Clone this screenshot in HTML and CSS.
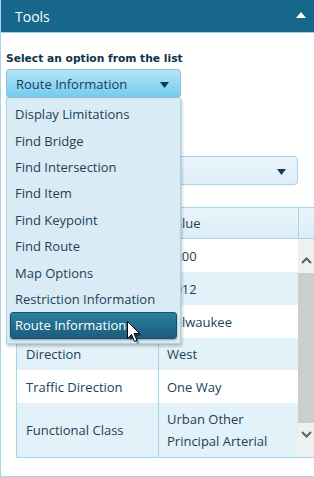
FILE: index.html
```html
<!DOCTYPE html>
<html>
<head>
<meta charset="utf-8">
<link rel="stylesheet" href="styles.css">
</head>
<body>
<div class="panel">
  <div class="hdr">
    <span class="hdr-title">Tools</span>
    <svg class="hdr-tri" width="10" height="6" viewBox="0 0 10 6"><path d="M5 0 L10 6 L0 6 Z" fill="#fff"/></svg>
  </div>
  <div class="content">
    <div class="label">Select an option from the list</div>
    <div class="sel-wrap">
      <div class="select active">
        <span>Route Information</span>
        <svg class="arr" width="9" height="6" viewBox="0 0 9 6"><path d="M0 0 L9 0 L4.5 6 Z" fill="#103a52"/></svg>
      </div>
      <ul class="list">
        <li>Display Limitations</li>
        <li>Find Bridge</li>
        <li>Find Intersection</li>
        <li>Find Item</li>
        <li>Find Keypoint</li>
        <li>Find Route</li>
        <li>Map Options</li>
        <li>Restriction Information</li>
        <li class="hl">Route Information</li>
      </ul>
    </div>
    <div class="select second">
      <span></span>
      <svg class="arr" width="9" height="6" viewBox="0 0 9 6"><path d="M0 0 L9 0 L4.5 6 Z" fill="#103a52"/></svg>
    </div>
    <div class="table">
      <div class="thead">
        <div class="th"></div>
        <div class="th">Value</div>
        <div class="th th-end"></div>
      </div>
      <div class="tbody">
        <div class="rows">
          <div class="row r33"><div class="td"></div><div class="td">1200</div></div>
          <div class="row alt r33"><div class="td"></div><div class="td">1012</div></div>
          <div class="row r33"><div class="td"></div><div class="td">Milwaukee</div></div>
          <div class="row alt r32"><div class="td">Direction</div><div class="td">West</div></div>
          <div class="row r33"><div class="td">Traffic Direction</div><div class="td">One Way</div></div>
          <div class="row alt r54"><div class="td">Functional Class</div><div class="td two">Urban Other<br>Principal Arterial</div></div>
        </div>
        <div class="sbar">
          <div class="sbtn up"><svg width="11" height="7" viewBox="0 0 11 7"><path d="M1 6 L5.5 1.5 L10 6" fill="none" stroke="#5f5f5f" stroke-width="2"/></svg></div>
          <div class="thumb"></div>
          <div class="sbtn down"><svg width="11" height="7" viewBox="0 0 11 7"><path d="M1 1 L5.5 5.5 L10 1" fill="none" stroke="#5f5f5f" stroke-width="2"/></svg></div>
        </div>
      </div>
    </div>
  </div>
</div>
<svg class="cursor" width="16" height="24" viewBox="0 0 16 24">
  <path d="M2.5 2.5 L2.5 19.5 L6.5 15.5 L9.5 22.5 L12 21.5 L9 14.5 L14.5 14.5 Z" fill="rgba(0,0,0,0.35)" transform="translate(1.5,1.5)"/>
  <path d="M1.5 1.5 L1.5 18.5 L5.5 14.5 L8.5 21.5 L11 20.5 L8 13.5 L13.5 13.5 Z" fill="#fff" stroke="#000" stroke-width="1"/>
</svg>
</body>
</html>
```

FILE: styles.css
```css
* { box-sizing: border-box; }
html, body { margin: 0; padding: 0; }
body {
  width: 314px;
  height: 477px;
  overflow: hidden;
  background: #fff;
  font-family: "Open Sans", "Noto Sans", sans-serif;
  position: relative;
}
.panel {
  border-left: 1px solid #a6d4ea;
  border-bottom: 1px solid #a6d4ea;
  height: 477px;
}
.hdr {
  height: 33px;
  background: #17678a;
  border-bottom: 1px solid #9fd0e6;
  display: flex;
  align-items: center;
  justify-content: space-between;
  padding: 0 8px 0 14px;
}
.hdr-title {
  color: #fff;
  font-size: 14px;
}
.hdr-tri { display: block; margin-top: -3px; }
.content {
  padding: 18px 0 0 5px;
}
.label {
  font-family: "DejaVu Sans", sans-serif;
  font-weight: bold;
  font-size: 10.7px;
  line-height: 15px;
  color: #0d3249;
  height: 18px;
}
.sel-wrap {
  position: relative;
  width: 175px;
  z-index: 2;
}
.select {
  height: 29px;
  border: 1px solid #a8c9d8;
  border-radius: 3px;
  display: flex;
  align-items: center;
  justify-content: space-between;
  padding: 0 11px 0 9px;
  font-size: 13px;
  color: #1b3e52;
}
.select.active {
  background: linear-gradient(#b4e6f8, #72cbee);
  border-color: #98bfd0;
}
.arr { display: block; margin-top: 2px; }
.list {
  position: absolute;
  top: 100%;
  left: 0;
  width: 175px;
  margin: 0;
  padding: 3px 3px 4px 3px;
  list-style: none;
  background: #d9ecf5;
  border: 1px solid #a9d3e7;
  border-top: none;
  box-shadow: 1px 2px 3px rgba(0,0,0,0.25);
}
.list li {
  height: 26.4px;
  display: flex;
  align-items: center;
  padding-left: 4px;
  font-size: 13px;
  color: #1b4258;
  border: 1px solid transparent;
  border-radius: 3px;
}
.list li.hl {
  background: linear-gradient(#2c7fa0, #1b5d7c);
  border-color: #16506c;
  color: #fff;
  box-shadow: 0 1px 2px rgba(0,0,0,0.35);
}
.select.second {
  margin-top: 58px;
  margin-right: 16px;
  background: linear-gradient(#edf6fb, #ddeef7);
  border-color: #a9d4ea;
  border-radius: 4px;
  height: 29px;
}
.table {
  margin: 22px 0 0 10px;
  border: 1px solid #a9d5ea;
  border-right: none;
}
.thead {
  display: grid;
  grid-template-columns: 142px 140px 1fr;
  height: 31px;
  background: linear-gradient(#eaf5fb, #dcedf6);
  border-bottom: 1px solid #a9d5ea;
}
.th {
  border-right: 1px solid #a9d5ea;
  display: flex;
  align-items: center;
  padding-left: 8px;
  font-size: 13px;
  color: #1b4258;
}
.th-end { border-right: none; }
.tbody {
  display: flex;
}
.rows { width: 281px; }
.row {
  display: grid;
  grid-template-columns: 142px 1fr;
  background: #fff;
}
.row.alt { background: #e3f1f8; }
.r33 { height: 33px; }
.r32 { height: 32px; }
.r54 { height: 54px; }
.td {
  display: flex;
  align-items: center;
  padding-left: 9px;
  font-size: 13px;
  color: #1b4258;
}
.td:first-child { border-right: 1px solid #a9d5ea; }
.td + .td { padding-left: 8px; }
.td.two { line-height: 22px; }
.sbar {
  width: 16px;
  background: #f0f0f0;
  display: flex;
  flex-direction: column;
}
.sbtn {
  height: 34px;
  display: flex;
  justify-content: center;
}
.sbtn svg { display: block; }
.sbtn.up { padding-top: 18px; }
.sbtn.down { padding-top: 8px; }
.thumb {
  height: 150px;
  background: #cdcdcd;
}
.cursor {
  position: absolute;
  left: 126px;
  top: 320px;
  z-index: 5;
}
```
